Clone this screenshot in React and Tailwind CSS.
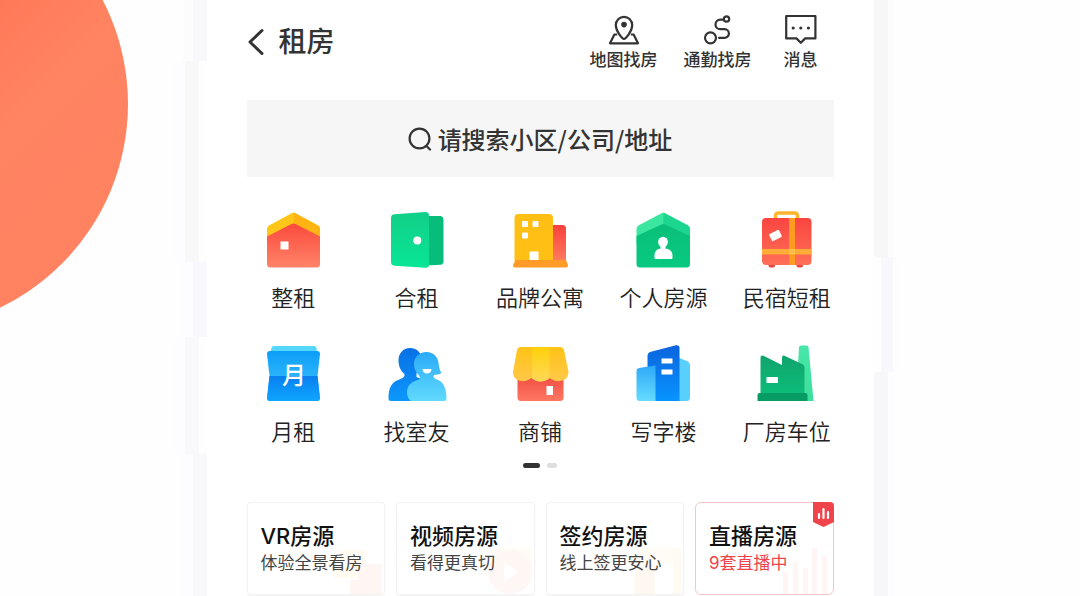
/* ---------- header icons ---------- */

const BackIcon = () => (
	<svg viewBox="0 0 18 28" className="w-[18px] h-7" fill="none" stroke="#333" strokeWidth="3" strokeLinecap="round" strokeLinejoin="round">
		<path d="M15 2.500L3 14L15 25.500" />
	</svg>
);

const MapPinIcon = () => (
	<svg viewBox="0 0 32 32" className="w-8 h-8" fill="none" stroke="#333" strokeWidth="2.2" strokeLinejoin="round">
		<path d="M9.200 20.500H6.400L2 29.300H30L25.600 20.500H22.800" />
		<path d="M16 25c-1.600 0-8.200-7.400-8.200-14a8.200 8.200 0 0 1 16.400 0c0 6.600-6.600 14-8.200 14z" />
		<circle cx="16" cy="10.600" r="2.800" fill="#333" stroke="none" />
	</svg>
);

const RouteIcon = () => (
	<svg viewBox="0 0 32 32" className="w-8 h-8" fill="none" stroke="#333" strokeWidth="2.2" strokeLinecap="round">
		<circle cx="24.500" cy="5" r="2.700" />
		<circle cx="8.500" cy="23.800" r="5.500" />
		<path d="M21.600 5.600h-3.300a4.800 4.800 0 0 0 0 9.600h4.300a4.300 4.300 0 0 1 0 8.600h-5.600" />
	</svg>
);

const MessageIcon = () => (
	<svg viewBox="0 0 32 32" className="w-8 h-8" fill="none" stroke="#333" strokeWidth="2.2" strokeLinejoin="round">
		<path d="M1.200 2H30.400V24.400H20.200L15.800 28.800L11.400 24.400H1.200z" />
		<g fill="#333" stroke="none">
			<circle cx="8.200" cy="14" r="1.600" />
			<circle cx="15.800" cy="14" r="1.600" />
			<circle cx="23.400" cy="14" r="1.600" />
		</g>
	</svg>
);

const SearchIcon = () => (
	<svg viewBox="0 0 24 24" className="w-6 h-6 shrink-0" fill="none" stroke="#333" strokeWidth="2.2" strokeLinecap="round">
		<circle cx="11.500" cy="11.500" r="9.900" />
		<path d="M19 19.500l3 3" />
	</svg>
);

/* ---------- category icons, all on a 60x60 grid ---------- */

const Gradient = ({ id, from, to }) => (
	<linearGradient id={id} x1="0" y1="0" x2="0" y2="1">
		<stop offset="0" stopColor={from} />
		<stop offset="1" stopColor={to} />
	</linearGradient>
);

const Icon = ({ children }) => (
	<svg viewBox="0 0 60 60" className="w-[60px] h-[60px]" aria-hidden="true">
		{children}
	</svg>
);

const HouseIcon = () => (
	<Icon>
		<Gradient id="house" from="#fb4a3c" to="#ff8368" />
		<path d="M4 19Q4 16.500 6 15.400L28.500 3.200Q30.500 2.200 32.500 3.200L55 15.400Q57 16.500 57 19V34H4z" fill="#ffc61a" />
		<path d="M30.500 2.500Q31.500 2.600 32.500 3.200L55 15.400Q57 16.500 57 19V30L30.500 14z" fill="#ffb414" />
		<path d="M4 26.500L28.500 14Q30.500 13 32.500 14L57 26.500V54Q57 57.500 53.500 57.500H7.500Q4 57.500 4 54z" fill="url(#house)" />
		<rect x="17.500" y="31.500" width="8" height="8" fill="#fff" />
	</Icon>
);

const DoorIcon = () => (
	<Icon>
		<Gradient id="door" from="#12cf88" to="#08e695" />
		<path d="M40 6H53.500Q56.500 6.500 56.500 10V51.500Q56.500 54.500 53.500 54.800L40 55.500z" fill="#08bd7b" />
		<path d="M4 8Q4 4.600 7.500 4.300L38.500 2Q42 2 42 5.500V54.500Q42 58 38.500 57.800L7.500 55.700Q4 55.300 4 52z" fill="url(#door)" />
		<circle cx="30.300" cy="30.500" r="4" fill="#fff" />
	</Icon>
);

const BuildingIcon = () => (
	<Icon>
		<Gradient id="brandWing" from="#f8423c" to="#ff7a5e" />
		<path d="M40 15H52.500Q56 15 56 18.500V51H40z" fill="url(#brandWing)" />
		<path d="M4.500 8Q4.500 4 8.500 4H39Q43 4 43 8V51H4.500z" fill="#ffbf14" />
		<path d="M5.500 50H56L58 55Q58 57.500 56 57.500H5Q3 57.500 3 55z" fill="#ff9b26" />
		<g fill="#fff">
			<rect x="12" y="11" width="6" height="6" rx="1" />
			<rect x="22.500" y="11" width="6" height="6" rx="1" />
			<rect x="12" y="22.500" width="6" height="6" rx="1" />
			<rect x="19.500" y="41.500" width="9" height="8.500" />
		</g>
	</Icon>
);

const OwnerIcon = () => (
	<Icon>
		<Gradient id="owner" from="#0abf78" to="#08c981" />
		<path d="M3.500 19Q3.500 16.500 5.500 15.400L28.500 3.200Q30.300 2.200 32 3.200L55 15.400Q57 16.500 57 19V34H3.500z" fill="#3be6a1" />
		<path d="M30.300 2.500L55 15.400Q57 16.500 57 19V28L30.300 16z" fill="#1cd58e" />
		<path d="M3.500 26L28.500 14.500Q30.300 13.700 32 14.500L57 26V54Q57 57.500 53.500 57.500H7Q3.500 57.500 3.500 54z" fill="url(#owner)" />
		<ellipse cx="30" cy="32" rx="4.900" ry="5.300" fill="#fff" />
		<path d="M27.500 35H32.500V38.500Q39.500 39.500 39.500 45.500V48Q39.500 49 38.500 49H22.500Q21.500 49 21.500 48V45.500Q21.500 39.500 27.500 38.500z" fill="#fff" />
	</Icon>
);

const SuitcaseIcon = () => (
	<Icon>
		<Gradient id="suitcase" from="#f94540" to="#ff7058" />
		<path d="M18.500 9V6Q18.500 3 21.500 3H37.500Q40.500 3 40.500 6V9" fill="none" stroke="#ffb62e" strokeWidth="3.400" />
		<path d="M11.500 53H18V55.500Q18 57.500 16 57.500H13.500Q11.500 57.500 11.500 55.500zM39.500 53H46V55.500Q46 57.500 44 57.500H41.500Q39.500 57.500 39.500 55.500z" fill="#e8453c" />
		<rect x="5" y="8" width="49.500" height="47" rx="4" fill="url(#suitcase)" />
		<rect x="32" y="8" width="6" height="47" fill="#ff9c20" />
		<rect x="5" y="39" width="49.500" height="5.500" fill="#ffac38" />
		<rect x="32" y="39" width="6" height="5.500" fill="#ffc045" />
		<rect x="13" y="21.500" width="11" height="8" rx="1" fill="#fff" transform="rotate(-27 18.500 25.500)" />
	</Icon>
);

const MonthIcon = () => (
	<Icon>
		<Gradient id="monthTop" from="#0c9df8" to="#45cafc" />
		<Gradient id="monthBottom" from="#087ff0" to="#10a5ff" />
		<path d="M11 2H51Q53 2 53.500 4L54.500 12H6.500L8.500 4Q9 2 11 2z" fill="#55d6fb" />
		<path d="M4 10Q4 7 7 7H54Q57 7 57 10L54.500 32L57 54Q57 57 54 57H7Q4 57 4 54L6.500 32z" fill="url(#monthTop)" />
		<path d="M6.500 32H54.500L57 54Q57 57 54 57H7Q4 57 4 54z" fill="url(#monthBottom)" />
		<text x="31" y="40" textAnchor="middle" fontSize="24" fontWeight="500" fill="#fff" fontFamily="'Noto Sans CJK SC', sans-serif">月</text>
	</Icon>
);

const RoommateIcon = () => (
	<Icon>
		<Gradient id="mateBack" from="#0870e6" to="#0d98fb" />
		<Gradient id="mateFront" from="#29aaf8" to="#62dafd" />
		<path d="M23 4C30.500 4 35 9.500 35 16.500C35 23 31.500 26.500 29.500 29.500V33L42 38V57H4Q1.500 57 1.500 54.500C1.500 43 5 38.500 11 36C15 34.500 18 33.500 17.500 30C13.500 27 11.500 22 11.500 16.500C11.500 9.500 16 4 23 4z" fill="url(#mateBack)" />
		<path d="M39.500 8C46.500 8 51 13 51.500 19C52 23.500 52.500 26 54.500 29C52.500 31 49 30.500 47 31C45.500 34 48 34.500 51 36C57 38.500 59.500 45 59.500 54.500Q59.500 57 57 57H24C20 54 19 48 21 43C23 39 27 37 32 35.500C33.500 34.500 33 32.500 31.500 31C28.500 28 27 24 27 20C27 13 32 8 39.500 8z" fill="url(#mateFront)" />
		<path d="M35.500 25H44.500C44.500 31 35.500 31 35.500 25z" fill="#fff" />
	</Icon>
);

const ShopIcon = () => (
	<Icon>
		<Gradient id="shopBody" from="#ef4a40" to="#ff7863" />
		<Gradient id="awning" from="#ffc316" to="#ffc849" />
		<Gradient id="awningMid" from="#ffd10a" to="#ffd858" />
		<path d="M7.500 30H53.500V53.500Q53.500 57 50 57H11Q7.500 57 7.500 53.500z" fill="url(#shopBody)" />
		<path d="M7 6Q8 3 11 3H50Q53 3 54 6L58.500 28C58.500 38 46 39.500 39.500 34C35 38.500 26 38.500 21.500 34C15 39.500 3 38 3 28z" fill="url(#awning)" />
		<path d="M22 3H39.500V34C35 38.500 26 38.500 22 34z" fill="url(#awningMid)" />
		<rect x="36.500" y="42" width="6.500" height="9" fill="#fff" />
	</Icon>
);

const OfficeIcon = () => (
	<Icon>
		<Gradient id="tower" from="#0c63dd" to="#0795ff" />
		<Gradient id="officeSide" from="#2da8f7" to="#65dcfd" />
		<path d="M44 13L54 17Q57 18.500 57 21.500V53.500Q57 57 53.500 57H44z" fill="#58d0fb" />
		<path d="M14.500 11.500Q14.500 9 17 8L43 1.200Q46.500 .8 46.500 4V57H14.500z" fill="url(#tower)" />
		<path d="M3.500 27Q3.500 24.500 6 24L22.500 21.500V57H7Q3.500 57 3.500 53.500z" fill="url(#officeSide)" />
		<rect x="28.500" y="14.500" width="11" height="5" fill="#fff" />
		<rect x="28.500" y="25.500" width="11" height="5" fill="#fff" />
	</Icon>
);

const FactoryIcon = () => (
	<Icon>
		<Gradient id="chimney" from="#48e6a8" to="#3ddf9d" />
		<Gradient id="factory" from="#10a36b" to="#0dbd7a" />
		<path d="M42 3Q42.200 1.500 44 1.500H49.500Q51.300 1.500 51.500 3L56.500 57H39z" fill="url(#chimney)" />
		<path d="M3.500 14Q3.500 10.500 7 12L25 21V14Q25 10.500 28 12L46 20.500Q47.500 21.500 47.500 23.500V50H3.500z" fill="url(#factory)" />
		<path d="M2.500 49H48.500Q50.500 49 50.500 51V57H.500V51Q.500 49 2.500 49z" fill="#079c64" />
		<rect x="9.500" y="33" width="11.500" height="6" fill="#fff" />
	</Icon>
);

/* ---------- pale drawings in the card corners ---------- */

const VrArt = () => (
	<svg viewBox="0 0 60 50" className="w-[60px] h-[50px]">
		<path d="M16 6H42V34H10V24H16z" fill="#fffbf0" />
		<path d="M34 20H58V50H26V36H34z" fill="#fff6f4" />
	</svg>
);

const VideoArt = () => (
	<svg viewBox="0 0 60 50" className="w-[60px] h-[50px]">
		<rect x="20" y="4" width="38" height="32" rx="4" fill="#fffcf6" />
		<circle cx="36" cy="28" r="22" fill="#fff5f2" fillOpacity=".8" />
		<path d="M30 18L45 28L30 38z" fill="#fff" />
	</svg>
);

const SignArt = () => (
	<svg viewBox="0 0 60 50" className="w-[60px] h-[50px]">
		<rect x="12" y="4" width="46" height="16" fill="#fffcf6" />
		<rect x="12" y="20" width="20" height="30" fill="#fff8f0" />
		<rect x="50" y="4" width="8" height="46" fill="#fffaf2" />
	</svg>
);

const LiveArt = () => (
	<svg viewBox="0 0 60 50" className="w-[60px] h-[50px]" fill="#fff5f4">
		<rect x="10" y="28" width="5" height="22" />
		<rect x="20" y="18" width="5" height="32" />
		<rect x="30" y="24" width="5" height="26" />
		<rect x="39" y="4" width="5" height="46" />
		<rect x="49" y="12" width="5" height="38" />
	</svg>
);

const LiveBadge = () => (
	<svg viewBox="0 0 21 25" className="absolute -top-px -right-px w-[21px] h-[25px]">
		<path d="M0 0H17Q21 0 21 4V20L10.500 25L0 20z" fill="#f0444b" />
		<path d="M6 12V16M10.500 7V16M15 10V16" stroke="#fff" strokeWidth="2.200" strokeLinecap="round" />
	</svg>
);

const actions = [
	{ label: "地图找房", icon: MapPinIcon },
	{ label: "通勤找房", icon: RouteIcon },
	{ label: "消息", icon: MessageIcon },
];

const categories = [
	{ label: "整租", icon: HouseIcon },
	{ label: "合租", icon: DoorIcon },
	{ label: "品牌公寓", icon: BuildingIcon },
	{ label: "个人房源", icon: OwnerIcon },
	{ label: "民宿短租", icon: SuitcaseIcon },
	{ label: "月租", icon: MonthIcon },
	{ label: "找室友", icon: RoommateIcon },
	{ label: "商铺", icon: ShopIcon },
	{ label: "写字楼", icon: OfficeIcon },
	{ label: "厂房车位", icon: FactoryIcon },
];

const cards = [
	{ title: "VR房源", text: "体验全景看房", art: VrArt },
	{ title: "视频房源", text: "看得更真切", art: VideoArt },
	{ title: "签约房源", text: "线上签更安心", art: SignArt },
	{ title: "直播房源", text: "9套直播中", art: LiveArt, live: true },
];

// Left bezel: the band shifts outwards where the side keys are
const LeftBezel = () => (
	<div className="w-8 shrink-0 flex flex-col items-end" aria-hidden="true">
		<div className="h-[61px] w-6 border-r-[14px] border-[#f8f8fb] bg-[#fcfcfd]" />
		<div className="h-[201px] w-8 pr-2">
			<div className="h-full border-r-[14px] border-[#f8f8f9] bg-[#fdfcfe]" />
		</div>
		<div className="h-[75px] w-7 border-r-[14px] border-[#f9f8fc] bg-[#fdfcfe]" />
		<div className="h-[117px] w-8 pr-2">
			<div className="h-full border-r-[14px] border-[#f9f8fa] bg-[#fdfcfe]" />
		</div>
		<div className="flex-1 w-7 border-r-[14px] border-[#f8f8fb] bg-[#fdfcfe]" />
	</div>
);

const RightBezel = () => (
	<div className="w-8 shrink-0 flex flex-col items-start" aria-hidden="true">
		<div className="h-[257px] w-5 border-l-[14px] border-[#f7f7f8] bg-[#fcfcfd]" />
		<div className="h-[115px] pl-[7px]">
			<div className="h-full w-4 border-l-[12px] border-[#f8f8fc] bg-[#fdfcfe]" />
		</div>
		<div className="flex-1 w-5 border-l-[14px] border-[#f7f7f9] bg-[#fdfcfe]" />
	</div>
);

const App = () => {
	return (
		<div className="relative min-h-screen overflow-hidden bg-[#fefefe] flex justify-center font-['Inter','Noto_Sans_CJK_SC',sans-serif] text-[#333]">
			<div className="absolute -left-[324px] -top-[122px] w-[452px] h-[452px] rounded-full bg-linear-to-br from-[#ff6a4c] from-30% via-[#ff8462] via-65% to-[#ff8060]" />

			<div className="relative w-full max-w-[731px] flex">
				<LeftBezel />

				<main className="flex-1 min-w-0 bg-white pb-px">
					<header className="h-[100px] pt-3.5 pl-10 pr-[50px] flex items-start justify-between">
						<div className="flex items-center gap-3.5 pt-2">
							<button aria-label="返回">
								<BackIcon />
							</button>
							<h1 className="text-[28px] leading-10 font-medium">租房</h1>
						</div>
						<nav className="flex gap-[26px]">
							{actions.map(({ label, icon: ActionIcon }) => (
								<button key={label} className="flex flex-col items-center gap-1 min-w-[46px] text-[17px] leading-5 font-medium">
									<ActionIcon />
									{label}
								</button>
							))}
						</nav>
					</header>

					<label className="mx-10 h-[77px] flex items-center justify-center gap-1.5 bg-[#f6f6f6]">
						<SearchIcon />
						<input
							type="text"
							aria-label="搜索"
							placeholder="请搜索小区/公司/地址"
							className="field-sizing-content h-9 bg-transparent outline-none font-['Noto_Sans_CJK_SC',sans-serif] text-2xl leading-9 font-medium placeholder:text-[#333]"
						/>
					</label>

					<nav className="mt-[33px] mx-[25px] grid grid-cols-5 gap-y-[31px]">
						{categories.map(({ label, icon: CategoryIcon }) => (
							<a key={label} href="#" className="flex flex-col items-center gap-[13px] text-[22px] leading-[30px] font-[350] whitespace-nowrap text-[#222]">
								<CategoryIcon />
								{label}
							</a>
						))}
					</nav>

					{/* Pager */}
					<div className="mt-4 flex justify-center gap-[7px]">
						<span className="w-[17px] h-[5px] rounded-full bg-[#333]" />
						<span className="w-[10px] h-[5px] rounded-full bg-[#dedede]" />
					</div>

					<section className="mt-[34px] mx-10 grid grid-cols-4 gap-[11px]">
						{cards.map(({ title, text, art: Art, live }) => (
							<a
								key={title}
								href="#"
								className={`relative h-[93px] pt-[18px] pl-[13px] border whitespace-nowrap ${live ? "rounded-md border-[#f8c4c8]" : "rounded-sm border-[#f3f3f3] shadow-xs"}`}
							>
								<span className="absolute right-0 bottom-0" aria-hidden="true">
									<Art />
								</span>
								<h2 className="relative text-[22px] leading-[30px] font-medium text-[#111]">{title}</h2>
								<p className={`relative text-[17px] leading-6 ${live ? "text-[#f0444b]" : "text-[#444]"}`}>{text}</p>
								{live && <LiveBadge />}
							</a>
						))}
					</section>
				</main>

				<RightBezel />
			</div>
		</div>
	);
};

export default App;
